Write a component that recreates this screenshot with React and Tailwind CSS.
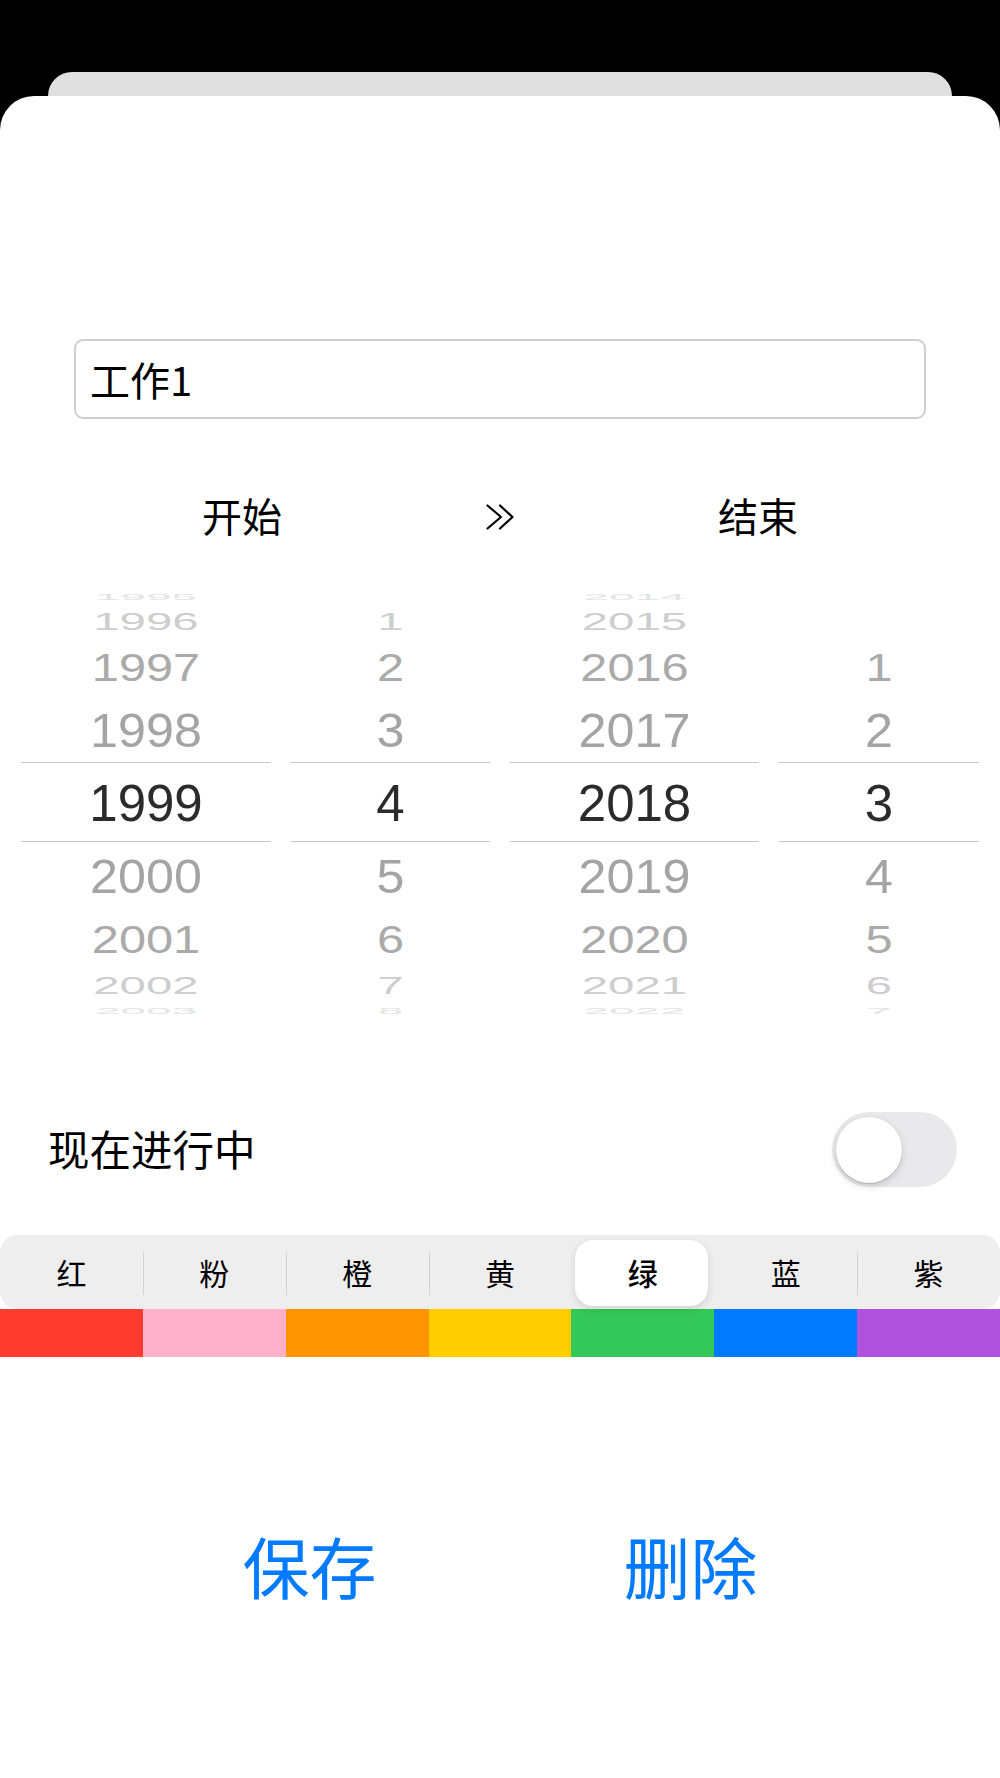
import React from 'react'

const cjk = "font-['Noto_Sans_CJK_SC',sans-serif]"

const OFFSETS = [0, 73, 136, 182, 207]
const SCALE_Y = [1, 0.94, 0.75, 0.48, 0.18]
const SCALE_X = [1, 0.985, 0.955, 0.93, 0.9]
const COLORS = ['#2b2b2b', '#a4a4a4', '#aaaaaa', '#cdcdcd', '#e4e4e4']

const range = (a, b) => Array.from({ length: b - a + 1 }, (_, i) => String(a + i))

const wheels = [
  { items: range(1990, 2030), selected: '1999' },
  { items: range(1, 12), selected: '4' },
  { items: range(2010, 2030), selected: '2018' },
  { items: range(1, 12), selected: '3' },
]

const segments = ['红', '粉', '橙', '黄', '绿', '蓝', '紫']
const swatches = ['#ff3b30', '#ffb1cb', '#ff9500', '#ffcc00', '#34c759', '#007aff', '#af52de']

function Wheel({ items, selected }) {
  const idx = items.indexOf(selected)
  const rows = []
  for (let k = -4; k <= 4; k++) {
    const value = items[idx + k]
    if (value === undefined) continue
    const d = Math.abs(k)
    const center = 225 + Math.sign(k) * OFFSETS[d]
    rows.push(
      <div
        key={k}
        className="absolute left-0 right-0 h-[51px] text-center text-[51px] leading-[51px]"
        style={{
          top: center - 25.5,
          color: COLORS[d],
          transform: `scale(${SCALE_X[d]}, ${SCALE_Y[d]})`,
        }}
      >
        {value}
      </div>
    )
  }
  return (
    <div className="relative h-[450px]">
      <div className="absolute left-0 right-0 top-[184px] h-[80px] border-y border-[#c8c8c8]" />
      {rows}
    </div>
  )
}

function Chevrons() {
  return (
    <svg width="28" height="26" viewBox="0 0 28 26" fill="none" stroke="#000" strokeWidth="2.2" strokeLinecap="round" strokeLinejoin="round">
      <path d="M1.5 1.5 L15 13 L1.5 24.5" />
      <path d="M14 1.5 L26.5 13 L14 24.5" />
    </svg>
  )
}

export default function App() {
  return (
    <div className="w-[1000px] h-[1778px] bg-black flex flex-col overflow-hidden">
      <div className="h-[72px] shrink-0" />
      <div className="mx-[48px] h-[24px] shrink-0 rounded-t-[24px] bg-[#e0e0e0]" />
      <div className={`flex-1 bg-white rounded-t-[34px] flex flex-col ${cjk}`}>
        <div className="mt-[243px] mx-[74px] h-[80px] border-2 border-[#d0d0d0] rounded-[9px] flex items-center pl-[14px] text-[40px] text-black">
          工作1
        </div>

        <div className="mt-[68px] mx-[113px] grid grid-cols-3 h-[56px] items-center text-[40px] leading-[56px] text-black">
          <div className="text-center">开始</div>
          <div className="flex justify-center pt-[3px]">
            <Chevrons />
          </div>
          <div className="text-center">结束</div>
        </div>

        <div className="mt-[35px] px-[21px] grid grid-cols-[250px_199px_249px_200px] gap-x-[20px] font-['Liberation_Sans',Arial,sans-serif]">
          {wheels.map((w, i) => (
            <Wheel key={i} items={w.items} selected={w.selected} />
          ))}
        </div>

        <div className="mt-[84px] h-[75px] pl-[48px] pr-[43px] flex items-center justify-between">
          <span className="text-[41.5px] leading-[60px] pb-[3px] text-black">现在进行中</span>
          <div className="w-[125px] h-[75px] rounded-full bg-[#e9e9eb] p-[4px] flex items-center">
            <div className="w-[66px] h-[66px] rounded-full bg-white shadow-[0_3px_8px_rgba(0,0,0,0.15),0_1px_1px_rgba(0,0,0,0.16)]" />
          </div>
        </div>

        <div className="mt-[48px] h-[74px] rounded-[18px] bg-[#eeeeef] grid grid-cols-7 relative">
          {segments.map((s, i) => {
            const active = i === 4
            const showSep = i > 0 && i !== 4 && i !== 5
            return (
              <div key={s} className="relative flex items-center justify-center">
                {showSep && <div className="absolute left-0 top-[17px] h-[43px] w-px bg-[#d2d2d2]" />}
                {active && (
                  <div className="absolute left-[4px] right-[6px] top-[5px] bottom-[3px] rounded-[18px] bg-white shadow-[0_3px_8px_rgba(0,0,0,0.12),0_0_1px_rgba(0,0,0,0.04)]" />
                )}
                <span className={`relative text-[30px] leading-none text-black ${active ? 'font-medium' : ''}`}>{s}</span>
              </div>
            )
          })}
        </div>

        <div className="h-[48px] grid grid-cols-7">
          {swatches.map((c) => (
            <div key={c} style={{ backgroundColor: c }} />
          ))}
        </div>

        <div className="mt-[168px] mx-[119px] grid grid-cols-2 h-[80px] items-center text-[67px] leading-[80px] text-[#007aff]">
          <div className="text-center">保存</div>
          <div className="text-center">删除</div>
        </div>
      </div>
    </div>
  )
}
